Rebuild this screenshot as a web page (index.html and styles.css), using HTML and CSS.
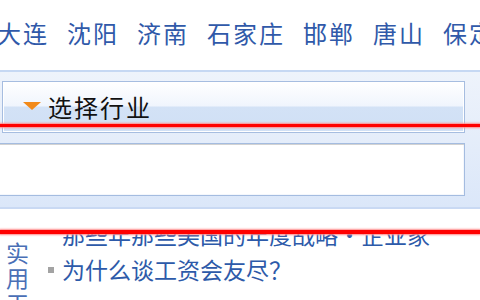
FILE: index.html
```html
<!DOCTYPE html>
<html lang="zh-CN">
<head>
    <meta charset="UTF-8">
    <meta name="viewport" content="width=device-width, initial-scale=1.0">
    <title>城市频道</title>
    <link rel="stylesheet" href="styles.css">
</head>
<body>

    <!-- city links -->
    <div class="cities">
        <a href="#" class="city">大连</a>
        <a href="#" class="city">沈阳</a>
        <a href="#" class="city">济南</a>
        <a href="#" class="city">石家庄</a>
        <a href="#" class="city">邯郸</a>
        <a href="#" class="city">唐山</a>
        <a href="#" class="city">保定</a>
    </div>

    <!-- search panel -->
    <div class="panel">
        <div class="select">
            <span class="arrow"></span>
            <span class="select-text">选择行业</span>
        </div>
        <div class="input"></div>
    </div>

    <!-- news list -->
    <div class="news">
        <div class="side">实用工具</div>
        <div class="list">
            <ul>
                <li><a href="#">那些年那些美国的年度战略·企业家</a></li>
                <li><span class="dot"></span><a href="#">为什么谈工资会友尽？</a></li>
            </ul>
        </div>
    </div>

    <!-- red marks drawn over the shot -->
    <div class="mark mark-one"></div>
    <div class="mark mark-two"></div>

</body>
</html>
```

FILE: styles.css
```css
*{
   margin:0;
   padding:0;
   box-sizing: border-box;
}
body{
   width:480px;
   height:300px;
   overflow:hidden;
   position:relative;
   background:#fff;
   font-family: "Noto Sans CJK SC", "Noto Sans", sans-serif;
}
a{
   text-decoration:none;
}
.cities{
   height:70px;
   padding-top:19px;
   margin-left:-3px;
   display:flex;
   gap:18px;
   white-space:nowrap;
   font-size:24px;
   line-height:28px;
   letter-spacing:2px;
}
.city{
   color:#3059a9;
   flex-shrink:0;
}
.panel{
   border-top:2px solid #c6d8f3;
   border-bottom:2px solid #c9d9f3;
   background:linear-gradient(#eef3fb, #dbe7f9);
   padding:9px 15px 11px 2px;
}
.select{
   height:52px;
   display:flex;
   align-items:center;
   padding-left:20px;
   border:1px solid #a6bde0;
   box-shadow: inset 0 0 0 1px #fff;
   background:linear-gradient(#ffffff 0%, #f0f5fd 48%, #d3e2f6 50%, #d0e0f5 100%);
}
.arrow{
   width:0;
   height:0;
   border-left:9px solid transparent;
   border-right:9px solid transparent;
   border-top:8px solid #f28a1a;
   margin-right:7px;
   margin-top:-2px;
}
.select-text{
   color:#111;
   font-size:24px;
   letter-spacing:2px;
   line-height:28px;
}
.input{
   height:53px;
   margin-top:10px;
   margin-left:-12px;
   background:#fff;
   border:1px solid #a4bce0;
   box-shadow: inset 0 2px 0 -1px #d2d2d2, inset 0 0 0 1px #f4f7fc;
}
.news{
   display:flex;
   padding-top:22px;
}
.side{
   width:40px;
   padding:9px 0 0 6px;
   font-size:23px;
   line-height:25px;
   color:#4a6fb6;
   height:80px;
   overflow:hidden;
}
.list{
   flex:1;
   height:70px;
   overflow:hidden;
}
.list ul{
   list-style:none;
   margin-top:-14px;
}
.list li{
   height:35px;
   line-height:35px;
   font-size:23px;
   white-space:nowrap;
   padding-left:22px;
   display:flex;
   align-items:center;
}
.list li a{
   color:#2d5aa9;
}
.dot{
   width:6px;
   height:6px;
   background:#a3a3a3;
   margin-left:-14px;
   margin-right:8px;
}
.mark{
   position:absolute;
   left:0;
   width:480px;
   background:#f00;
   box-shadow:0 0 2px 1px #ff8a8a;
}
.mark-one{
   top:124px;
   height:3px;
}
.mark-two{
   top:230px;
   height:4px;
}
```
